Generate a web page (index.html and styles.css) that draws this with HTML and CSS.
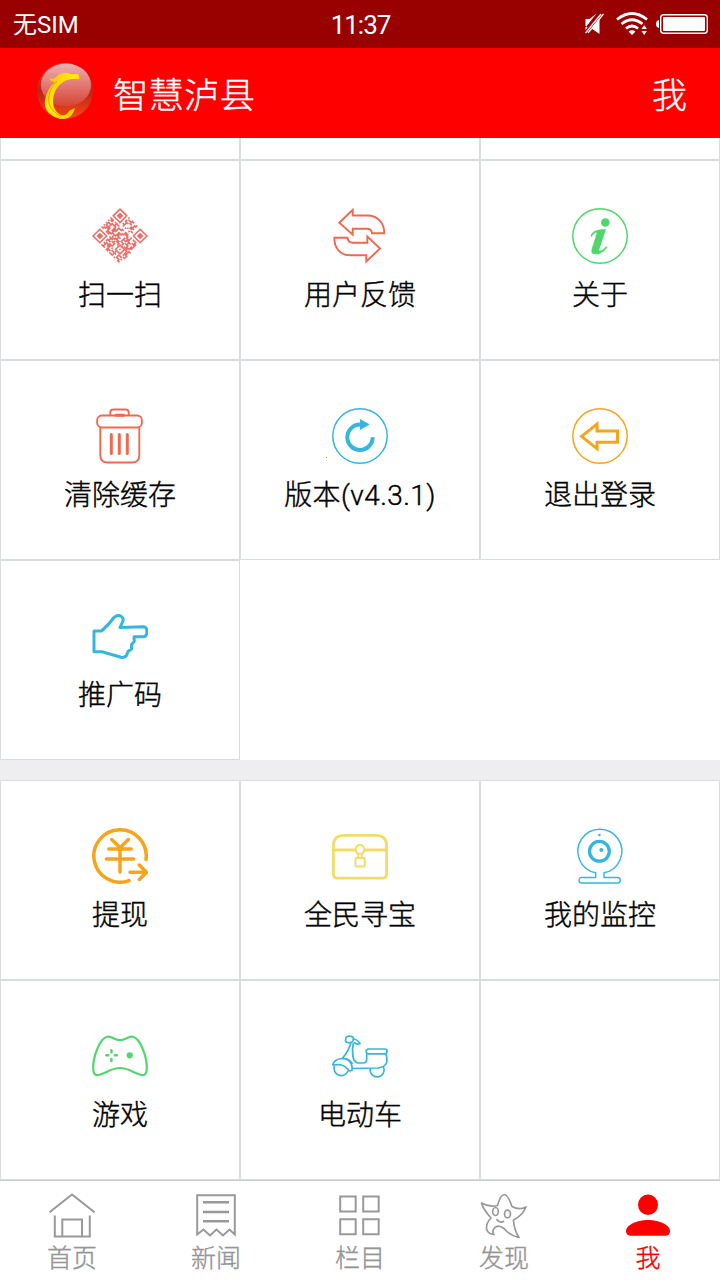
FILE: index.html
```html
<!DOCTYPE html>
<html lang="zh-CN">
<head>
<meta charset="utf-8">
<title>智慧泸县</title>
<link rel="stylesheet" href="styles.css">
</head>
<body>
<div class="app">
  <div class="status">
    <span class="carrier">无SIM</span>
    <span class="clock">11:37</span>
    <svg class="indicators" viewBox="0 0 128 30" fill="#fff">
      <g transform="translate(-.5 0)"><path d="M2 10h4l7-5.500L2 18.500zM16 9v16l-8-5.500zM2 17v4l2-2.500z"/>
      <path d="M17.500 5L2 24M20 5L4.500 24" stroke="#fff" stroke-width="1.200"/></g>
      <g fill="none" stroke="#fff" stroke-width="2.700"><path d="M33 10.500Q48 -1.500 63 10.500"/><path d="M37.500 15Q48 6.500 58.500 15"/><path d="M42 19.500Q48 14.500 54 19.500"/></g>
      <path d="M44.500 22.500Q48 20 51.500 22.500L48 26zM57.500 20l2.700-4 2.700 4zM57.500 22l2.700 4 2.700-4z"/>
      <path d="M75 11v8q-3-.5-3-4t3-4z"/>
      <rect x="76.700" y="5.700" width="46.600" height="18.600" rx="3" fill="none" stroke="#fff" stroke-width="1.400"/>
      <rect x="79" y="8" width="42" height="14" rx="1"/>
    </svg>
  </div>
  <header class="header">
    <svg class="logo" viewBox="0 0 56 56">
      <defs>
        <linearGradient id="ball" x1="0" y1="0" x2="0" y2="1"><stop offset="0" stop-color="#d84a4a"/><stop offset=".5" stop-color="#c42018"/><stop offset="1" stop-color="#f34a12"/></linearGradient>
        <linearGradient id="shine" x1="0" y1="0" x2="0" y2="1"><stop offset="0" stop-color="#edb0b2"/><stop offset="1" stop-color="#d84232"/></linearGradient>
        <linearGradient id="gold" x1="0" y1="0" x2="1" y2="1"><stop offset="0" stop-color="#ffb000"/><stop offset=".45" stop-color="#ffea10"/><stop offset="1" stop-color="#ffc400"/></linearGradient>
      </defs>
      <circle cx="28" cy="28" r="28" fill="url(#ball)"/>
      <ellipse cx="29" cy="22" rx="25" ry="21.500" fill="url(#shine)"/>
      <path d="M12 14q2 3 6 1 5-6 13-5 3 2 8 1 4 0 3 5-9-1-16 3-10 7-10 19 0 10 8 14 6 1 8-4l6-3-2 5q-4 7-13 6Q6 51 8 37 10 26 18 19q-5 0-6-5z" fill="url(#gold)"/>
      <path d="M20 18Q10 28 12 40q2 9 12 13" fill="none" stroke="#ff9800" stroke-width="1"/>
    </svg>
    <h1 class="title">智慧泸县</h1>
    <span class="page">我</span>
  </header>

  <main class="content">
    <div class="grid peek"><div class="cell"></div><div class="cell"></div><div class="cell"></div></div>
    <div class="grid">
      <div class="cell">
        <svg class="icon qr" viewBox="0 0 56 56">
          <g transform="translate(28 0) rotate(45) scale(1.584)" fill="none" stroke="currentColor" stroke-width="1">
            <path d="M.5 .5h6v6h-6zM18.500 .5h6v6h-6zM.5 18.500h6v6h-6z"/>
            <path d="M2 3.500h3M20 3.500h3M2 21.500h3" stroke-width="3"/>
            <path d="M8 .5h1m2 0h2m2 0h1M9 1.500h3m2 0h2M8 2.500h1m2 0h2m1 0h1M8 3.500h3m2 0h3M9 4.500h1m3 0h2M8 5.500h2m2 0h1m2 0h2M9 6.500h1m1 0h1m2 0h1"/>
            <path d="M0 8.500h3m1 0h4m2 0h2m1 0h3m2 0h1m1 0h3M1 9.500h2m2 0h1m2 0h3m2 0h4m1 0h1m3 0h2M0 10.500h1m2 0h4m1 0h1m3 0h2m2 0h3m2 0h3M1 11.500h3m2 0h3m1 0h3m2 0h1m1 0h4m2 0h1M0 12.500h2m1 0h1m2 0h3m1 0h2m3 0h3m1 0h1m2 0h2M1 13.500h4m1 0h2m2 0h4m1 0h1m2 0h3m1 0h2M0 14.500h1m1 0h3m2 0h4m1 0h1m2 0h3m2 0h3M1 15.500h2m1 0h4m1 0h1m1 0h4m2 0h1m1 0h3m1 0h2M0 16.500h2m2 0h3m2 0h3m1 0h3m2 0h1m2 0h3"/>
            <path d="M8 17.500h3m1 0h1m2 0h1M22 17.500h2M9 18.500h1m1 0h3M22 18.500h3M8 19.500h3m2 0h1M22 19.500h1m1 0h1M8 20.500h1m2 0h3M23 20.500h2M9 21.500h4m1 0h1m2 0h1m2 0h3M8 22.500h2m1 0h2m2 0h4m1 0h1m2 0h1M9 23.500h1m2 0h3m2 0h1m2 0h3M8 24.500h3m1 0h2m1 0h3m1 0h1m2 0h2"/>
            <path d="M16.500 16.500h4v4h-4zM18 18.500h1"/>
          </g>
        </svg>
        <span>扫一扫</span>
      </div>
      <div class="cell">
        <svg class="icon coral" viewBox="0 0 56 56">
          <path d="M7.300 14.700L20.700 1.800v5.700H35C46 7.500 52.300 15 52.300 25.300H40Q39.500 20.700 35 20.700H20.700v6zM2.300 29.700H15.500Q16 34.700 20.500 34.700H35.300V28.500L48 40.500 34.300 53.500V47.300H18C8 47.300 2.300 40 2.300 29.700z"/>
        </svg>
        <span>用户反馈</span>
      </div>
      <div class="cell">
        <svg class="icon green" viewBox="0 0 56 56">
          <circle cx="28" cy="28" r="27.200" stroke-width="1.500"/>
          <g fill="currentColor" stroke="none"><circle cx="33.300" cy="14.500" r="4.300"/><path d="M18.500 28C20.500 23 25 21 34 21.300L27.200 41.500C27 44.500 31.500 42 34.200 38.300L35.200 39.200C32 44 27.500 46.500 23 46.300C19 46 19 43 20 40L24.500 26C25 22.500 21 26 19.700 28.700z"/></g>
        </svg>
        <span>关于</span>
      </div>
      <div class="cell">
        <svg class="icon coral" viewBox="0 0 56 56">
          <rect x="5.200" y="7.500" width="44.600" height="12" rx="4.500"/>
          <path d="M18.300 7.500V4.500Q18.300 1.500 21.300 1.500H33.700Q36.700 1.500 36.700 4.500V7.500M8.300 19.700V47Q8.300 54.500 15.500 54.500H40Q47.300 54.500 47.300 47V19.700"/>
          <path d="M24 7.200h7.500M19.300 26.500v19M27.300 26.500v19M35.300 26.500v19" stroke-width="3" stroke-linecap="round"/>
        </svg>
        <span>清除缓存</span>
      </div>
      <div class="cell">
        <i class="speck"></i>
        <svg class="icon blue" viewBox="0 0 56 56">
          <circle cx="28" cy="28" r="27.200" stroke-width="1.500"/>
          <path d="M40.700 29.300A12.700 12.700 0 1 1 28 16.600" stroke-width="4"/>
          <path d="M28 11l9.700 5.500L28 22z" fill="currentColor" stroke="none"/>
        </svg>
        <span class="version">版本(v4.3.1)</span>
      </div>
      <div class="cell">
        <svg class="icon orange" viewBox="0 0 56 56">
          <circle cx="28" cy="28" r="27.200" stroke-width="1.500"/>
          <path d="M9.500 28.300L25 16V23H45.500V34.300H25V40.700z" stroke-width="3"/>
        </svg>
        <span>退出登录</span>
      </div>
      <div class="cell">
        <svg class="icon blue" viewBox="0 0 56 56">
          <path d="M2 23H9.500C13 20 18 15 22 9.500C27 5 33 9 30.500 14L28 19.500L51.500 18.700C56 19 56 28.500 51.500 28.700H42L42.300 33.500L39.500 36.500V41L36 43.500L34.500 47.500Q32.500 50 29 49.300L10 43.700H2z" stroke-width="3" stroke-linejoin="round"/>
        </svg>
        <span>推广码</span>
      </div>
    </div>

    <div class="grid second">
      <div class="cell">
        <svg class="icon orange" viewBox="0 0 56 56">
          <path d="M54 31.500A26.200 26.200 0 1 0 37 52.600M19.700 11.500L28 19.700L36.300 11.500M28 19.700V44M16.800 21H39.200M14.300 31H41.700M38 44.300H54.500M47.300 37L54.500 44.300L47.300 51.500" stroke-width="3.500" stroke-linecap="round" stroke-linejoin="round"/>
        </svg>
        <span>提现</span>
      </div>
      <div class="cell">
        <svg class="icon yellow" viewBox="0 0 56 56">
          <path d="M1.400 22V18Q1.400 7.400 12 7.400H44Q54.600 7.400 54.600 18V46Q54.600 50.200 50.500 50.200H5.500Q1.400 50.200 1.400 46V22H24M32 22H54.600" stroke-width="2.800"/>
          <g stroke-width="1.900"><path d="M26.300 30V26.500Q24 25 24 21.500Q24 17 28 17Q32 17 32 21.500Q32 25 29.700 26.500V30M25 25.800h6"/><rect x="23.500" y="30" width="9.300" height="8.500" rx=".7"/></g>
        </svg>
        <span>全民寻宝</span>
      </div>
      <div class="cell">
        <svg class="icon blue" viewBox="0 0 56 56">
          <g stroke-width="1.400"><path d="M23.700 49.500V44.800A22 22 0 1 1 32 44.800V49.500H45.500Q48.300 49.500 48.300 52.200T45.500 55H9.700Q7 55 7 52.200T9.700 49.500z"/></g>
          <circle cx="27.400" cy="23.300" r="9.900" stroke-width="3.300"/>
          <g fill="currentColor" stroke="none"><circle cx="29.300" cy="22" r="2"/><circle cx="27.400" cy="7" r="1.300"/></g>
        </svg>
        <span>我的监控</span>
      </div>
      <div class="cell">
        <svg class="icon green" viewBox="0 0 56 56">
          <path d="M28 12.200C22 12.200 20 7.500 15 8.800C7 11 1.200 30 1.200 39C1.200 48 4 48.500 11 45.500C18 42.500 21 40 28 40S38 42.500 45 45.500C52 48.500 54.800 48 54.800 39C54.800 30 49 11 41 8.800C36 7.500 34 12.200 28 12.200z" stroke-width="2.200"/>
          <circle cx="37.700" cy="27.300" r="3.100" fill="currentColor" stroke="none"/>
          <path d="M19.400 22.300v2M19.400 31v2M14.300 27.300h2M22.800 27.300h2" stroke-width="2.500" stroke-linecap="round"/>
        </svg>
        <span>游戏</span>
      </div>
      <div class="cell">
        <svg class="icon blue" viewBox="0 0 56 56">
          <g stroke-width="1.700" stroke-linejoin="round">
            <path d="M14 9.500Q16 7 21 9Q22 12 20 14Q15 15.500 13.500 13.500zM21 10.500Q26 12 28 15.500Q25 17 22 14.500M19 14.700Q17 22 10.500 30.300M21.500 14.500Q20 20 20.800 28Q22 35 27 35H31Q34.700 35 34.700 31V25.500"/>
            <rect x="34.200" y="21" width="20.800" height="4.900" rx="2.400"/>
            <path d="M54 26Q55.500 31 54.500 35Q53 39 46 40L20 40.500M.8 37Q2 31 10 30.500Q18 30.500 20 38V42.500L17 43Q13 36.500 6 36.500zM10.500 30.300Q17 30 20.500 36"/>
            <path d="M2.500 37.500A7 7 0 1 0 16 43M38.300 40.500A7 7 0 1 0 51.500 39"/>
          </g>
        </svg>
        <span>电动车</span>
      </div>
      <div class="cell"></div>
    </div>
  </main>

  <nav class="tabs">
    <a class="tab"><svg viewBox="0 0 48 46"><path d="M1.500 20.200L24 2.500L46.500 20.200M6.800 23.500V44.500H41.800V23.500M14.300 44V27.500H34V44"/></svg><span>首页</span></a>
    <a class="tab"><svg viewBox="0 0 48 46"><path d="M5.200 42.500V3.200H42.800V42.500L37.500 37.500L31 43.500L24.500 37.500L18 43.500L11.500 37.500z"/><path d="M11 10.300H37M11 20H37M11 29.300H37" stroke-width="2.500"/></svg><span>新闻</span></a>
    <a class="tab"><svg viewBox="0 0 48 46"><path d="M4.200 4.500h15.500v15H4.200zM27.200 4.500h15.500v15H27.200zM4.200 27.200h15.500v15H4.200zM27.200 27.200h15.500v15H27.200z"/></svg><span>栏目</span></a>
    <a class="tab"><svg viewBox="0 0 48 46" stroke-linejoin="round"><path d="M17.500 13.500Q20.500 2.500 24.500 2.500Q28 3 32 14.500Q39 18.500 46 15Q43 23 33.500 28Q34 38 39 45.500Q29 43 24 36.500Q18 32 14.500 36Q11.500 39 14 42.500Q8 42 6.500 37Q6 31 11 26Q3 17 1.500 11Q9 15.500 17.500 13.500z" stroke-width="1.700"/><g stroke-width="1.700"><ellipse cx="15.500" cy="19.500" rx="2.800" ry="4"/><ellipse cx="27.500" cy="22" rx="3" ry="3.800"/><path d="M16.500 27Q20 32 24 29"/></g></svg><span>发现</span></a>
    <a class="tab active"><svg viewBox="0 0 48 46"><ellipse cx="24" cy="12.700" rx="10" ry="10.300"/><path d="M2 39C2 33 13 28 24 28S46 33 46 39Q46 43.800 41 43.800H7Q2 43.800 2 39z"/></svg><span>我</span></a>
  </nav>
</div>
</body>
</html>
```

FILE: styles.css
```css
* { box-sizing: border-box; }
body {
  margin: 0;
  background: #fff;
  color: #000;
  font-family: "Noto Sans CJK SC", sans-serif;
  font-weight: 300;
  -webkit-text-stroke: .4px currentColor;
}
.app {
  width: 720px;
  height: 1280px;
  display: flex;
  flex-direction: column;
  overflow: hidden;
}
.status {
  height: 48px;
  padding: 2px 8px 0 13px;
  display: grid;
  grid-template-columns: 1fr auto 1fr;
  align-items: center;
  background: #990000;
  color: #fff;
  font: 400 25.500px/46px Roboto, "Noto Sans CJK SC", sans-serif;
  -webkit-text-stroke: 0;
}
.carrier { font-size: 24px; }
.clock { font-size: 26px; letter-spacing: -1px; margin-right: 4px; }
.indicators { width: 128px; height: 30px; justify-self: end; margin-top: -2px; }
.header {
  height: 90px;
  padding: 0 33px 0 37px;
  display: flex;
  align-items: center;
  background: #ff0000;
  color: #fff;
  font-size: 35px;
}
.logo { width: 56px; height: 56px; margin-bottom: 4px; }
.title {
  flex: 1;
  margin: 0 0 2px 20px;
  font-size: 35.500px;
  font-weight: 300;
}
.page { margin-bottom: 2px; }
.content { height: 1042px; }
.grid {
  display: grid;
  grid-template-columns: repeat(3, 240px);
  grid-auto-rows: 200px;
}
.grid.peek { grid-auto-rows: 22px; }
.second { border-top: 20px solid #eeeef0; }
.cell {
  position: relative;
  display: flex;
  flex-direction: column;
  align-items: center;
  padding-top: 47px;
  border: 1px solid #d9dddf;
  font-family: Roboto, "Noto Sans CJK SC", sans-serif;
  font-size: 28px;
  line-height: 40px;
}
.peek .cell { border-top: 0; padding: 0; }
.cell span { margin-top: 12px; }
.cell .version { letter-spacing: .4px; }
.icon {
  width: 56px;
  height: 56px;
  fill: none;
  stroke: currentColor;
  stroke-width: 1.900;
}
.qr { color: #ec6c67; }
.coral { color: #ed6a4f; }
.green { color: #4fd66c; }
.blue { color: #35b6dc; }
.orange { color: #f4a51c; }
.yellow { color: #f2dc68; }
.speck {
  position: absolute;
  left: 85px;
  top: 96px;
  width: 1px;
  height: 1px;
  background: #a99a00;
}
.tabs {
  height: 100px;
  display: grid;
  grid-template-columns: repeat(5, 1fr);
  border-top: 1px solid #c8caca;
}
.tab {
  display: flex;
  flex-direction: column;
  align-items: center;
  padding-top: 11px;
  color: #959595;
  font-size: 25px;
  line-height: 36px;
}
.tab svg {
  width: 48px;
  height: 46px;
  fill: none;
  stroke: #999;
  stroke-width: 2;
}
.tab.active { color: #f00000; }
.tab.active svg { fill: #ff0000; stroke: none; }
```
